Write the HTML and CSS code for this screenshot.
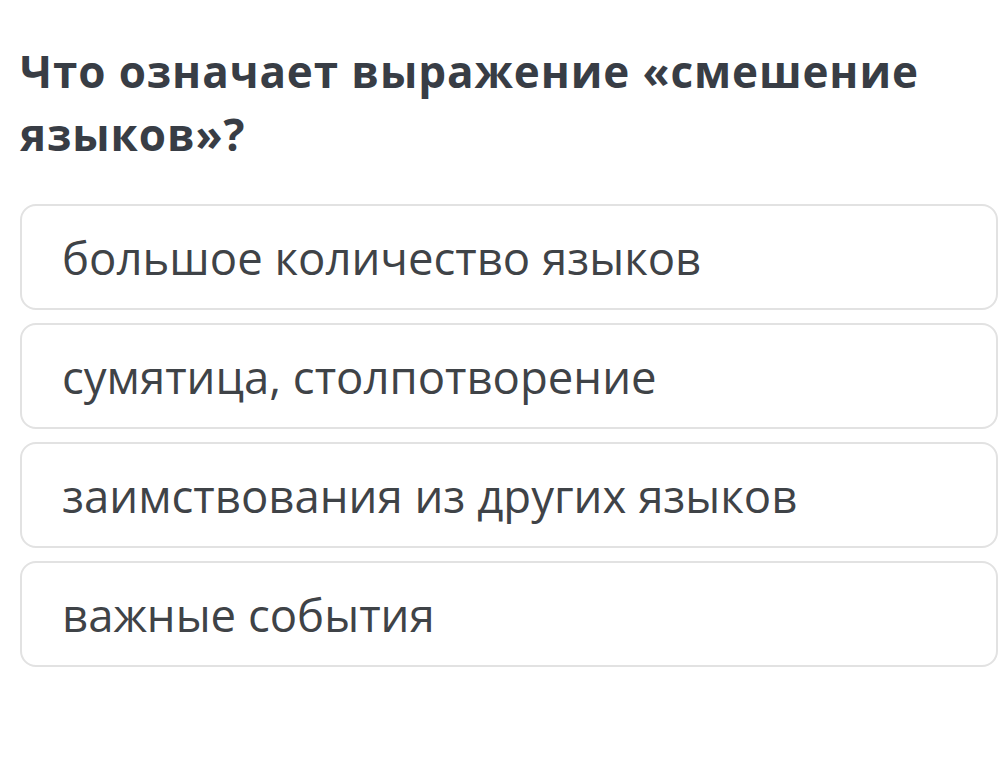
FILE: index.html
```html
<!DOCTYPE html>
<html lang="ru">
<head>
  <meta charset="UTF-8" />
  <title>Вопрос</title>
  <link rel="stylesheet" href="styles.css">
</head>
<body>
  <div class="quiz">
    <h1 class="question">Что означает выражение «смешение языков»?</h1>
    <div class="answers">
      <div class="answer">большое количество языков</div>
      <div class="answer">сумятица, столпотворение</div>
      <div class="answer">заимствования из других языков</div>
      <div class="answer">важные события</div>
    </div>
  </div>
</body>
</html>
```

FILE: styles.css
```css
html, body { margin:0; padding:0; background:#fff; }
body {
  font-family:"Open Sans", "Noto Sans", sans-serif;
  color:#3c4045;
}
.quiz {
  padding:40px 0 0 20px;
}
.question {
  margin:0 0 38px;
  font-size:44px;
  font-weight:700;
  line-height:63px;
  color:#383d45;
  letter-spacing:0.9px;
  padding-right:60px;
}
.answers {
  display:flex;
  flex-direction:column;
  gap:13px;
}
.answer {
  height:106px;
  box-sizing:border-box;
  display:flex;
  align-items:center;
  padding:0 0 0 40px;
  border:2px solid #e2e2e2;
  border-radius:16px;
  font-size:45.5px;
  color:#3f4347;
}
```
